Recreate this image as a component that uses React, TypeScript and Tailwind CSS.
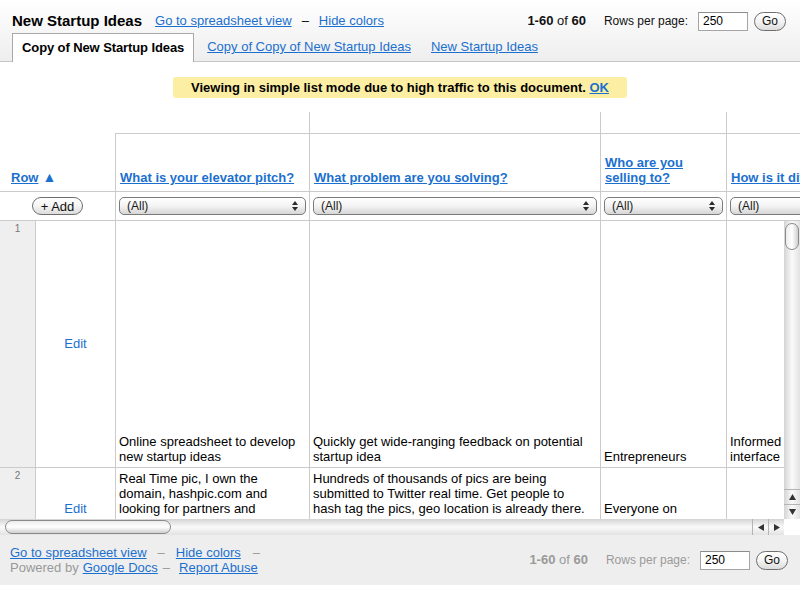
import React from 'react';

const LINK = 'text-[#1b70cf] underline';

type Col = { w: string; title: string[] };

const COLS: Col[] = [
  { w: 'w-[194px]', title: ['What is your elevator pitch?'] },
  { w: 'w-[291px]', title: ['What problem are you solving?'] },
  { w: 'w-[126px]', title: ['Who are you', 'selling to?'] },
  { w: 'w-[220px]', title: ['How is it different?'] },
];

function Arrows() {
  return (
    <svg width="8" height="12" viewBox="0 0 8 12" className="shrink-0">
      <path d="M4 1 L7 5 H1 Z M4 11 L7 7 H1 Z" fill="#2b2b2b" />
    </svg>
  );
}

function FilterSelect() {
  return (
    <div className="flex h-[18px] flex-1 items-center rounded-[5px] border border-[#7b7b7b] bg-linear-to-b from-white via-[#f3f3f3] to-[#d6d6d6] pl-[7px] pr-[6px] text-[12px] leading-none text-[#1a1a1a]">
      <span className="flex-1">(All)</span>
      <Arrows />
    </div>
  );
}

function PillButton({ children, className = '' }: { children: React.ReactNode; className?: string }) {
  return (
    <button
      className={`flex items-center justify-center rounded-full border border-[#6f6f6f] bg-linear-to-b from-white via-[#f4f4f4] to-[#dcdcdc] leading-none text-[#111] ${className}`}
    >
      {children}
    </button>
  );
}

function PageControls({ muted }: { muted?: boolean }) {
  const txt = muted ? 'text-[#9a9a9a]' : 'text-[#111]';
  return (
    <div className="flex items-center">
      <span className={`text-[13px] ${txt}`}>
        <b>1-60</b> of <b>60</b>
      </span>
      <span className={`ml-[18px] text-[12px] ${txt}`}>Rows per page:</span>
      <input
        readOnly
        value="250"
        className="ml-[10px] h-[19px] w-[50px] border border-[#a5a5a5] border-t-[#8c8c8c] bg-white px-[4px] text-[12px] text-black outline-none"
      />
      <PillButton className="ml-[6px] h-[19px] w-[32px] text-[12px]">Go</PillButton>
    </div>
  );
}

function VScrollbar() {
  return (
    <div className="flex w-[16px] shrink-0 flex-col bg-linear-to-r from-[#d4d4d4] via-[#fafafa] to-[#e2e2e2]">
      <div className="mx-[1px] mt-[2px] h-[27px] rounded-full border border-[#8a8a8a] bg-linear-to-r from-[#ececec] via-white to-[#cfcfcf]" />
      <div className="flex-1" />
      <div className="flex h-[15px] items-center justify-center border-t border-[#b5b5b5]">
        <svg width="7" height="6" viewBox="0 0 7 6">
          <path d="M3.5 0 L7 6 H0 Z" fill="#333" />
        </svg>
      </div>
      <div className="flex h-[15px] items-center justify-center border-t border-[#b5b5b5]">
        <svg width="7" height="6" viewBox="0 0 7 6">
          <path d="M3.5 6 L7 0 H0 Z" fill="#333" />
        </svg>
      </div>
    </div>
  );
}

function HScrollbar() {
  return (
    <div className="flex h-[16px] w-[800px]">
      <div className="flex flex-1 items-center bg-linear-to-b from-[#d4d4d4] via-[#fafafa] to-[#e2e2e2]">
        <div className="ml-[5px] h-[14px] w-[166px] rounded-full border border-[#8a8a8a] bg-linear-to-b from-[#ececec] via-white to-[#cfcfcf]" />
        <div className="flex-1" />
        <div className="flex h-full w-[16px] items-center justify-center border-l border-[#b5b5b5]">
          <svg width="6" height="7" viewBox="0 0 6 7">
            <path d="M0 3.5 L6 0 V7 Z" fill="#333" />
          </svg>
        </div>
        <div className="flex h-full w-[16px] items-center justify-center border-l border-[#b5b5b5]">
          <svg width="6" height="7" viewBox="0 0 6 7">
            <path d="M6 3.5 L0 0 V7 Z" fill="#333" />
          </svg>
        </div>
      </div>
      <div className="w-[16px] bg-white" />
    </div>
  );
}

type Row = {
  n: number;
  h: string;
  cells: { lines: string[]; align: string }[];
};

const ROWS: Row[] = [
  {
    n: 1,
    h: 'h-[247px]',
    cells: [
      { lines: ['Online spreadsheet to develop', 'new startup ideas'], align: 'justify-end' },
      { lines: ['Quickly get wide-ranging feedback on potential', 'startup idea'], align: 'justify-end' },
      { lines: ['Entrepreneurs'], align: 'justify-end' },
      { lines: ['Informed', 'interface'], align: 'justify-end' },
    ],
  },
  {
    n: 2,
    h: 'h-[82px]',
    cells: [
      {
        lines: [
          'Real Time pic, I own the',
          'domain, hashpic.com and',
          'looking for partners and',
          'professionals who can help build',
          'it',
        ],
        align: 'justify-start',
      },
      {
        lines: [
          'Hundreds of thousands of pics are being',
          'submitted to Twitter real time. Get people to',
          'hash tag the pics, geo location is already there.',
          'We do not host the pics, just track and show them',
          'on a map',
        ],
        align: 'justify-start',
      },
      { lines: ['Everyone on', 'Twitter/Social media', 'users'], align: 'justify-end' },
      { lines: [], align: 'justify-end' },
    ],
  },
];

export default function App() {
  return (
    <div className="h-[600px] w-[800px] overflow-hidden bg-white font-['Liberation_Sans',Arial,sans-serif] text-[13px] text-black">
      {/* top bar */}
      <div className="border-b border-[#c6c6c6] bg-linear-to-b from-white to-[#eeeeee] pl-[12px] pr-[14px] pt-[11px]">
        <div className="flex h-[20px] items-center justify-between">
          <div className="flex items-center">
            <span className="text-[15px] font-bold">New Startup Ideas</span>
            <a className={`ml-[13px] ${LINK}`}>Go to spreadsheet view</a>
            <span className="mx-[10px]">–</span>
            <a className={LINK}>Hide colors</a>
          </div>
          <PageControls />
        </div>
        <div className="mt-[2px] flex items-center">
          <div className="-mb-px flex h-[29px] items-center border border-b-0 border-[#a9a9a9] bg-white px-[9px] font-bold tracking-[-0.1px]">
            Copy of New Startup Ideas
          </div>
          <a className={`ml-[13px] ${LINK}`}>Copy of Copy of New Startup Ideas</a>
          <a className={`ml-[20px] ${LINK}`}>New Startup Ideas</a>
        </div>
      </div>

      {/* notice */}
      <div className="mt-[15px] flex justify-center">
        <div className="flex h-[21px] items-center rounded-[3px] bg-[#fcefa3] px-[18px] font-bold">
          Viewing in simple list mode due to high traffic to this document.&nbsp;
          <a className={LINK}>OK</a>
        </div>
      </div>

      {/* table head */}
      <div className="mt-[14px] flex h-[22px]">
        <div className="w-[115px] shrink-0" />
        {COLS.map((c, i) => (
          <div key={i} className={`${c.w} shrink-0 border-b border-[#cbcbcb] ${i > 0 ? 'border-l' : ''}`} />
        ))}
      </div>
      <div className="flex h-[58px] border-b border-[#cbcbcb]">
        <div className="flex w-[115px] shrink-0 items-end px-[11px] pb-[6px] leading-[15px]">
          <a className={`font-bold ${LINK}`}>Row</a>
          <span className="ml-[4px] text-[14px] leading-[15px] text-[#1b70cf]">▲</span>
        </div>
        {COLS.map((c, i) => (
          <div
            key={i}
            className={`${c.w} flex shrink-0 flex-col justify-end border-l border-[#cbcbcb] pb-[6px] pl-[4px] leading-[15px]`}
          >
            {c.title.map((t) => (
              <a key={t} className={`whitespace-nowrap font-bold ${LINK}`}>
                {t}
              </a>
            ))}
          </div>
        ))}
      </div>
      <div className="flex h-[29px] border-b border-[#cbcbcb]">
        <div className="flex w-[115px] shrink-0 items-center justify-center">
          <PillButton className="h-[18px] w-[51px] text-[13px]">+ Add</PillButton>
        </div>
        {COLS.map((c, i) => (
          <div key={i} className={`${c.w} flex shrink-0 items-center border-l border-[#cbcbcb] pl-[3px] pr-[3px]`}>
            <FilterSelect />
          </div>
        ))}
      </div>

      {/* rows */}
      <div className="flex h-[298px]">
        <div className="flex-1 overflow-hidden">
          {ROWS.map((r) => (
            <div key={r.n} className={`flex ${r.h} shrink-0 border-b border-[#cbcbcb]`}>
              <div className="w-[36px] shrink-0 border-r border-[#cbcbcb] bg-[#efefef] pt-[2px] text-center text-[10px] leading-[12px] text-[#777]">
                {r.n}
              </div>
              <div className="flex w-[79px] shrink-0 items-center justify-center">
                <a className="text-[#1b70cf]">Edit</a>
              </div>
              {COLS.map((c, i) => (
                <div
                  key={i}
                  className={`${c.w} flex shrink-0 flex-col ${r.cells[i].align} overflow-hidden border-l border-[#cbcbcb] px-[3px] py-[3px] leading-[15px]`}
                >
                  {r.cells[i].lines.map((l) => (
                    <div key={l} className="whitespace-nowrap">
                      {l}
                    </div>
                  ))}
                </div>
              ))}
            </div>
          ))}
        </div>
        <VScrollbar />
      </div>
      <HScrollbar />

      {/* footer */}
      <div className="flex h-[50px] items-center justify-between bg-[#eeeeee] pl-[10px] pr-[12px]">
        <div className="leading-[15px]">
          <div className="flex">
            <a className={LINK}>Go to spreadsheet view</a>
            <span className="ml-[11px] mr-[11px] text-[#999]">–</span>
            <a className={LINK}>Hide colors</a>
            <span className="ml-[12px] text-[#999]">–</span>
          </div>
          <div className="flex">
            <span className="text-[#999]">Powered by</span>
            <a className={`ml-[4px] ${LINK}`}>Google Docs</a>
            <span className="ml-[5px] text-[#999]">–</span>
            <a className={`ml-[9px] ${LINK}`}>Report Abuse</a>
          </div>
        </div>
        <PageControls muted />
      </div>
    </div>
  );
}
